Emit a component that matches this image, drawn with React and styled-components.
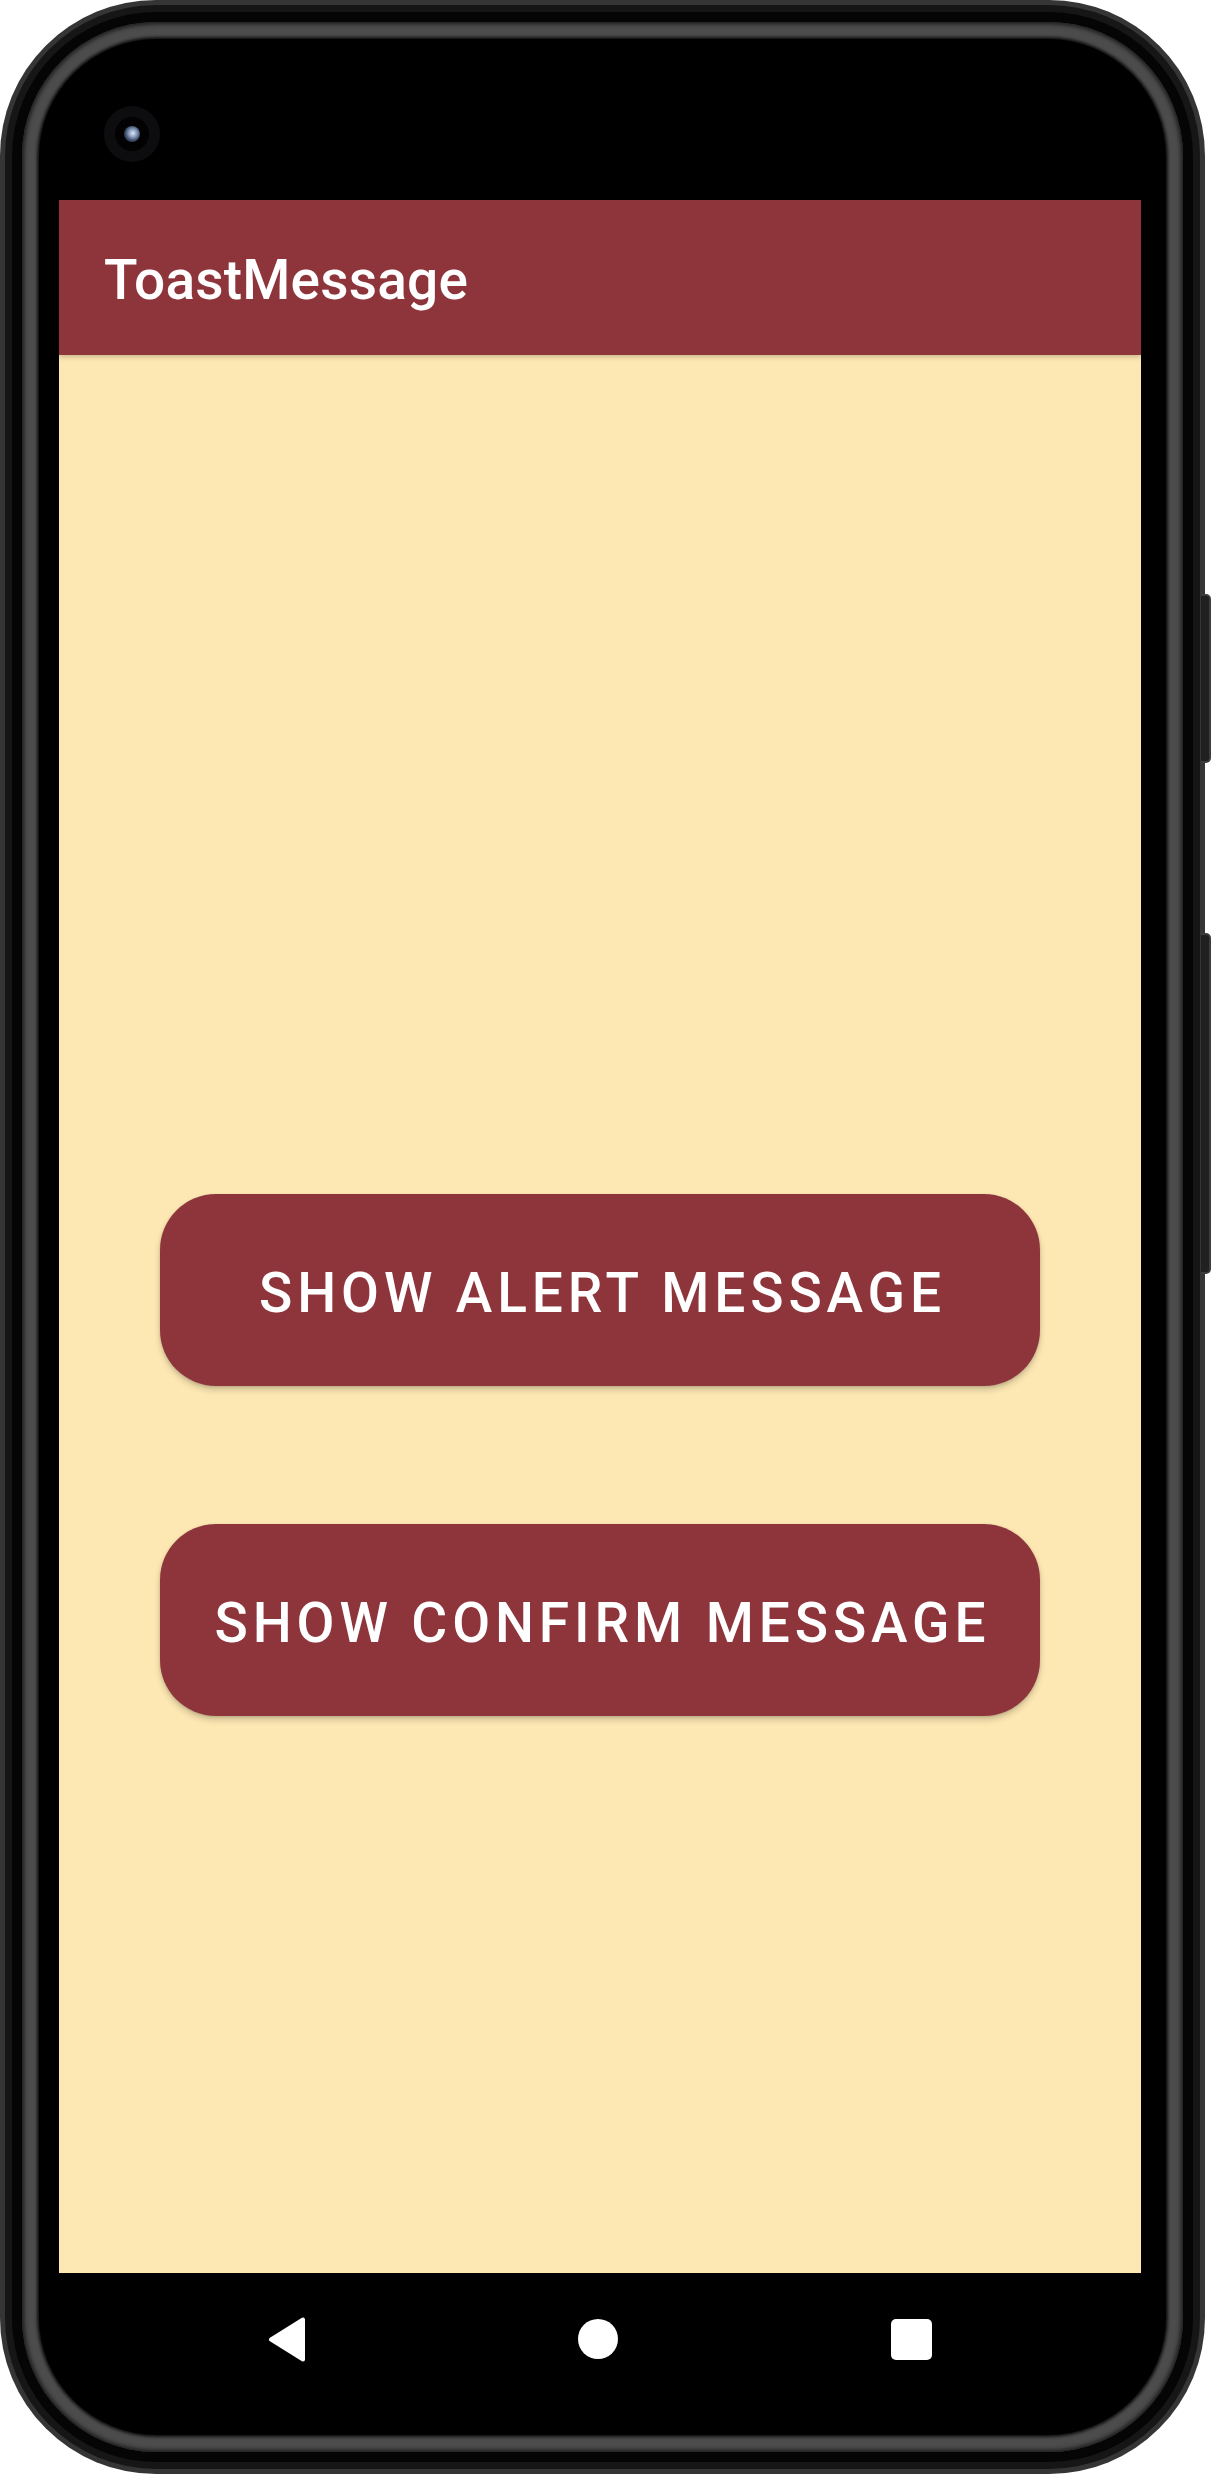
import React from 'react';
import styled, { createGlobalStyle } from 'styled-components';

const GlobalStyle = createGlobalStyle`
  html, body {
    margin: 0;
    padding: 0;
    background: #ffffff;
  }
  body {
    font-family: Roboto, "Liberation Sans", sans-serif;
  }
`;

const RED = '#8e353c';
const CREAM = '#fde8b3';

// outer shell of the phone, with rings that give the edge its look
const Device = styled.div`
  position: relative;
  width: 1205px;
  height: 2474px;
  box-sizing: border-box;
  border-radius: 156px;
  background: #353535;
  padding: 5px;
`;

const Rim = styled.div`
  height: 100%;
  box-sizing: border-box;
  border-radius: 151px;
  background: #161616;
  padding: 7px;
`;

const InnerRim = styled.div`
  height: 100%;
  box-sizing: border-box;
  border-radius: 144px;
  background: #050505;
  padding: 10px;
`;

const Band = styled.div`
  height: 100%;
  box-sizing: border-box;
  border-radius: 134px;
  background: #4c4c4c;
  box-shadow: inset 0 0 4px 2px #1a1a1a;
  padding: 17px;
`;

const Face = styled.div`
  height: 100%;
  box-sizing: border-box;
  border-radius: 118px;
  background: #000;
  box-shadow: 0 0 3px 2px #111;
  display: flex;
  flex-direction: column;
  padding: 0 25px 0 20px;
  overflow: hidden;
`;

const SideKey = styled.div`
  position: absolute;
  right: -6px;
  top: ${p => p.top}px;
  height: ${p => p.height}px;
  width: 10px;
  border-radius: 0 5px 5px 0;
  background: #202020;
  border: 2px solid #3c3c3c;
  border-left: none;
  box-sizing: border-box;
`;

const TopBezel = styled.div`
  height: 161px;
  flex-shrink: 0;
  box-sizing: border-box;
  padding: 67px 0 0 45px;
`;

const Camera = styled.div`
  width: 56px;
  height: 56px;
  border-radius: 50%;
  background: #0d0d0f;
  display: flex;
  align-items: center;
  justify-content: center;
`;

const CameraLens = styled.div`
  width: 34px;
  height: 34px;
  border-radius: 50%;
  background: #020203;
  display: flex;
  align-items: center;
  justify-content: center;
`;

const CameraGlass = styled.div`
  width: 16px;
  height: 16px;
  border-radius: 50%;
  background: radial-gradient(circle at 55% 45%, #dde6f5 0%, #8ea2c4 30%, #3a4a66 60%, #10141c 100%);
`;

const Screen = styled.div`
  height: 2073px;
  flex-shrink: 0;
  display: flex;
  flex-direction: column;
  background: ${CREAM};
`;

const AppBar = styled.div`
  height: 155px;
  flex-shrink: 0;
  display: flex;
  align-items: center;
  padding-left: 45px;
  background: ${RED};
  box-shadow: 0 2px 5px rgba(0, 0, 0, 0.22);
  position: relative;
  z-index: 1;
`;

const Title = styled.h1`
  margin: 0;
  padding-top: 5px;
  font-family: Roboto, "Liberation Sans", sans-serif;
  font-weight: 500;
  font-size: 55px;
  color: #ffffff;
  letter-spacing: 0.2px;
`;

const Content = styled.main`
  flex: 1;
  display: flex;
  flex-direction: column;
  align-items: center;
  gap: 138px;
  padding-top: 839px;
`;

const ActionButton = styled.button`
  width: 880px;
  height: 192px;
  border: none;
  border-radius: 56px;
  background: ${RED};
  color: #ffffff;
  font-family: Roboto, "Liberation Sans", sans-serif;
  font-weight: 500;
  font-size: 55px;
  letter-spacing: 0.0893em;
  text-transform: uppercase;
  padding: 6px 0 0 0.0893em;
  box-shadow: 0 4px 6px rgba(0, 0, 0, 0.18), 0 1px 3px rgba(0, 0, 0, 0.12);
  cursor: pointer;
`;

const NavBar = styled.nav`
  height: 132px;
  flex-shrink: 0;
  display: flex;
  align-items: center;
  justify-content: center;
  gap: 273px;
`;

const HomeDot = styled.div`
  width: 40px;
  height: 40px;
  border-radius: 50%;
  background: #ffffff;
`;

const RecentsSquare = styled.div`
  width: 41px;
  height: 41px;
  border-radius: 5px;
  background: #ffffff;
`;

const BackIcon = () => (
  <svg width="37" height="45" viewBox="0 0 37 45">
    <polygon
      points="3,22.5 35,2.5 35,42.5"
      fill="#fff"
      stroke="#fff"
      strokeWidth="4"
      strokeLinejoin="round"
    />
  </svg>
);

const App = () => {
  return (
    <>
      <GlobalStyle />
      <Device>
        <Rim>
          <InnerRim>
            <Band>
              <Face>
                <TopBezel>
                  <Camera>
                    <CameraLens>
                      <CameraGlass />
                    </CameraLens>
                  </Camera>
                </TopBezel>
                <Screen>
                  <AppBar>
                    <Title>ToastMessage</Title>
                  </AppBar>
                  <Content>
                    <ActionButton>Show Alert Message</ActionButton>
                    <ActionButton>Show Confirm Message</ActionButton>
                  </Content>
                </Screen>
                <NavBar>
                  <BackIcon />
                  <HomeDot />
                  <RecentsSquare />
                </NavBar>
              </Face>
            </Band>
          </InnerRim>
        </Rim>
        <SideKey top={594} height={169} />
        <SideKey top={933} height={341} />
      </Device>
    </>
  );
};

export default App;
